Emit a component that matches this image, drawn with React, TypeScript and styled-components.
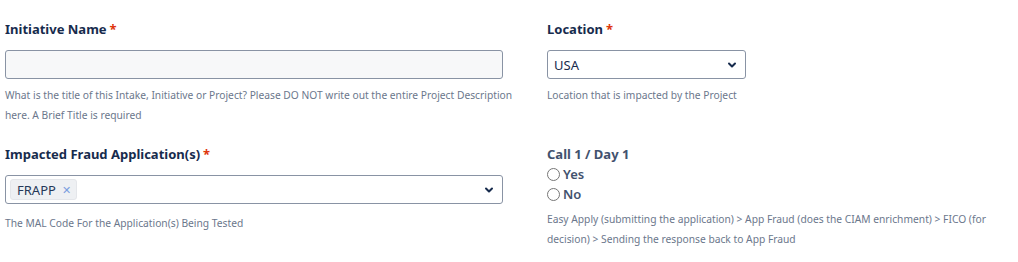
import React, { useState } from 'react';
import styled, { createGlobalStyle } from 'styled-components';

const GlobalStyle = createGlobalStyle`
  body {
    margin: 0;
    background: #fff;
    font-family: 'Noto Sans', 'Open Sans', sans-serif;
  }
`;

const Form = styled.div`
  display: grid;
  grid-template-columns: 516px 452px;
  column-gap: 26px;
  row-gap: 19px;
  padding: 19px 0 0 5px;
`;

const Field = styled.div`
  display: flex;
  flex-direction: column;
`;

const Label = styled.div<{ $muted?: boolean }>`
  font-size: 13px;
  line-height: 20px;
  font-weight: 700;
  color: ${(p) => (p.$muted ? '#42526e' : '#172b4d')};
`;

const Required = styled.span`
  color: #de350b;
  margin-left: 3px;
`;

const TextInput = styled.input`
  box-sizing: border-box;
  margin-top: 11px;
  width: 498px;
  height: 29px;
  border: 1px solid #8993a4;
  border-radius: 3px;
  background: #f7f8f9;
  outline: none;
`;

const SelectBox = styled.div<{ $width: number }>`
  box-sizing: border-box;
  margin-top: 11px;
  width: ${(p) => p.$width}px;
  height: 29px;
  border: 1px solid #8993a4;
  border-radius: 3px;
  background: #fff;
  display: flex;
  align-items: center;
  padding: 0 8px 0 4px;
  gap: 4px;
`;

const SelectValue = styled.span`
  flex: 1;
  font-size: 13px;
  color: #172b4d;
  padding-left: 2px;
`;

const Tag = styled.span`
  display: inline-flex;
  align-items: center;
  gap: 6px;
  height: 19px;
  padding: 0 5px 0 6px;
  border-radius: 3px;
  border: 1px solid #e4e6ea;
  background: #eef0f3;
  font-size: 13px;
  color: #253858;
`;

const TagClose = styled.span`
  font-size: 11px;
  color: #7a9ee0;
`;

const Spacer = styled.span`
  flex: 1;
`;

const Help = styled.div<{ $top?: number }>`
  margin-top: ${(p) => p.$top ?? 6}px;
  font-size: 10.25px;
  line-height: 20px;
  color: #6b778c;
`;

const RadioRow = styled.label`
  display: flex;
  align-items: center;
  gap: 3px;
  height: 20px;
  font-size: 13px;
  font-weight: 600;
  color: #42526e;
  cursor: pointer;
`;

const RadioInput = styled.input`
  margin: 0;
  width: 13px;
  height: 13px;
  accent-color: #0052cc;
`;

const Chevron = () => (
  <svg width="10" height="10" viewBox="0 0 10 10">
    <path d="M2 3.5 L5 6.5 L8 3.5" fill="none" stroke="#172b4d" strokeWidth="2" strokeLinecap="round" strokeLinejoin="round" />
  </svg>
);

export default function App() {
  const [call, setCall] = useState('');
  return (
    <>
      <GlobalStyle />
      <Form>
        <Field>
          <Label>
            Initiative Name<Required>*</Required>
          </Label>
          <TextInput />
          <Help>
            What is the title of this Intake, Initiative or Project? Please DO NOT write out the entire Project Description here. A Brief Title is required
          </Help>
        </Field>
        <Field>
          <Label>
            Location<Required>*</Required>
          </Label>
          <SelectBox $width={199}>
            <SelectValue>USA</SelectValue>
            <Chevron />
          </SelectBox>
          <Help>Location that is impacted by the Project</Help>
        </Field>
        <Field>
          <Label>
            Impacted Fraud Application(s)<Required>*</Required>
          </Label>
          <SelectBox $width={498}>
            <Tag>
              FRAPP<TagClose>✕</TagClose>
            </Tag>
            <Spacer />
            <Chevron />
          </SelectBox>
          <Help $top={9}>The MAL Code For the Application(s) Being Tested</Help>
        </Field>
        <Field>
          <Label $muted>Call 1 / Day 1</Label>
          <RadioRow>
            <RadioInput type="radio" name="call" checked={call === 'yes'} onChange={() => setCall('yes')} />
            Yes
          </RadioRow>
          <RadioRow>
            <RadioInput type="radio" name="call" checked={call === 'no'} onChange={() => setCall('no')} />
            No
          </RadioRow>
          <Help $top={5}>
            Easy Apply (submitting the application) &gt; App Fraud (does the CIAM enrichment) &gt; FICO (for decision) &gt; Sending the response back to App Fraud
          </Help>
        </Field>
      </Form>
    </>
  );
}
